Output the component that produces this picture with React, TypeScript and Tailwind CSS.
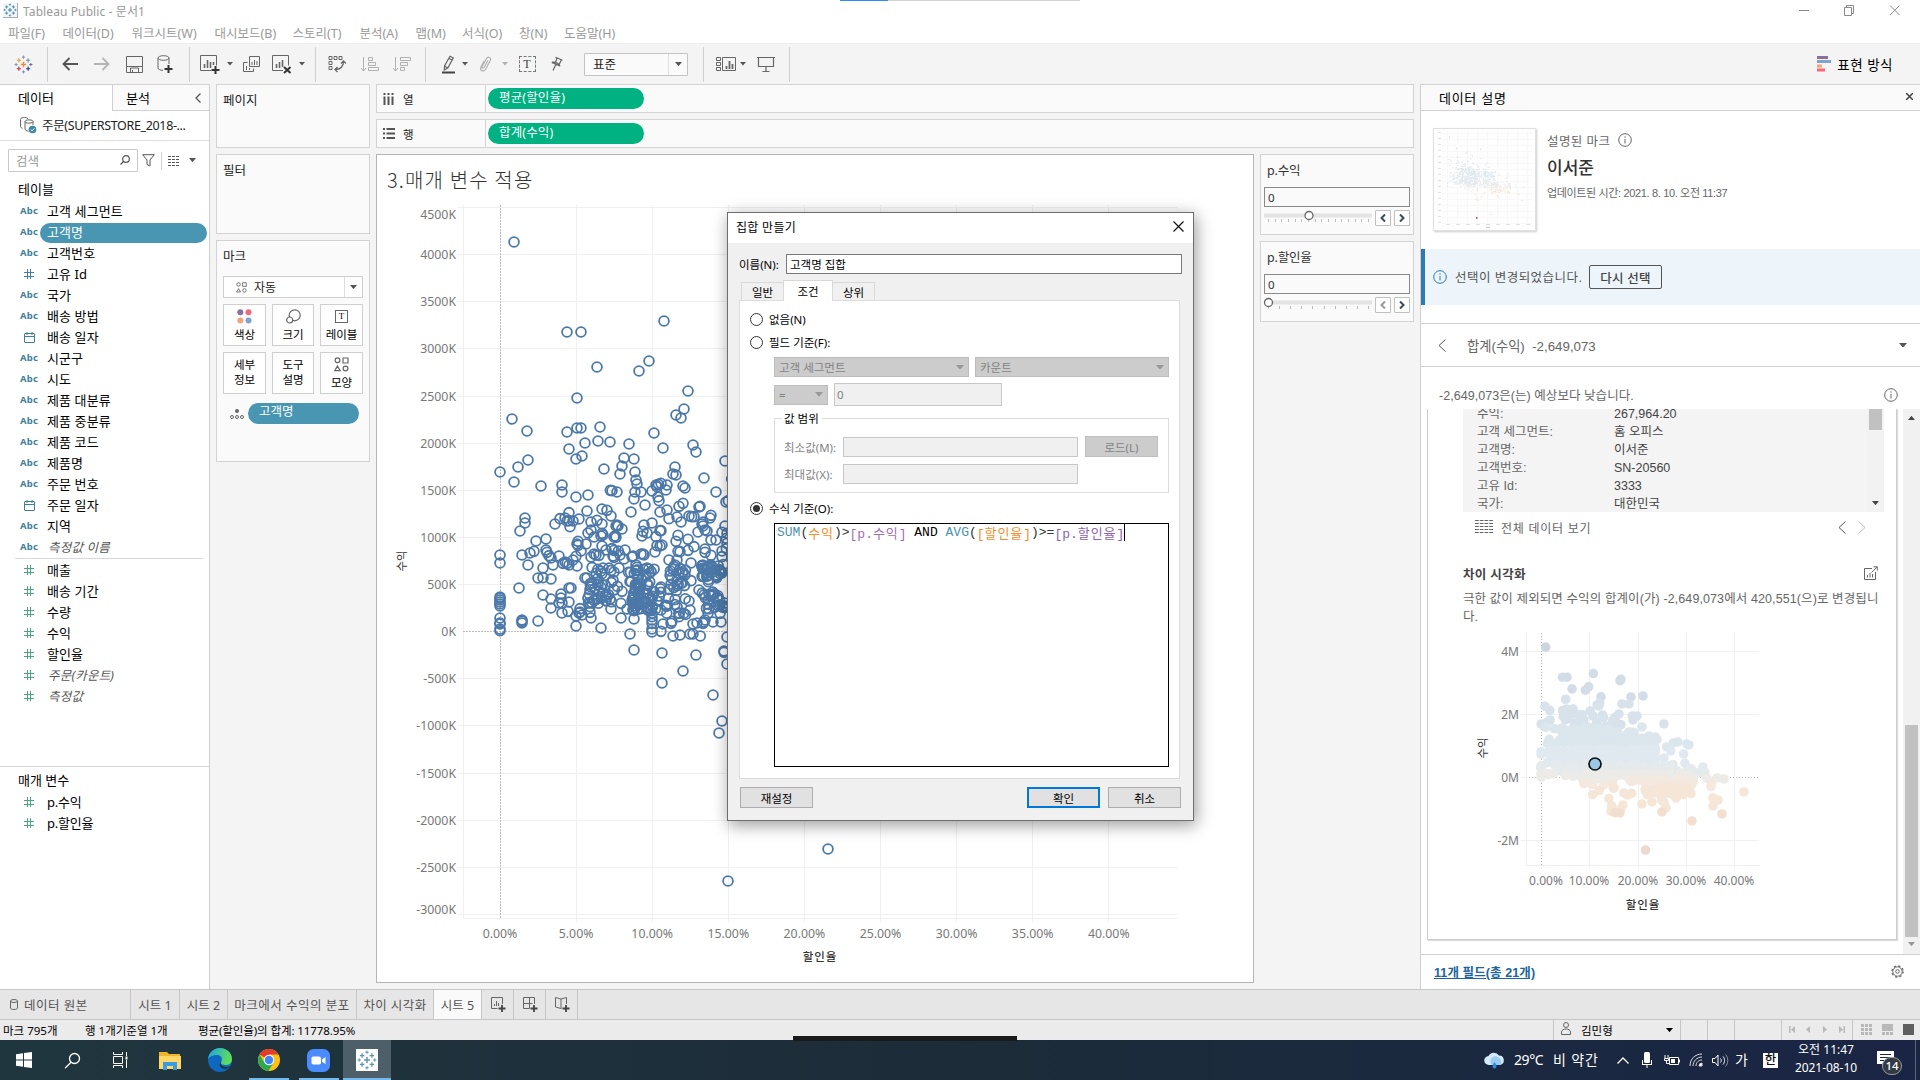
import React from "react";

/* ---------- data ---------- */

type Pt = [number, number];

const upper: Pt[] = [
  [417,276],[867,513],[576,546],[618,546],[822,633],[666,651],[792,663],[606,744],[939,723],[927,777],[903,795],[918,804],[411,807],[456,843],[576,846],[606,834],[618,834],[675,831],[837,849],[630,879],[669,873],[705,876],[762,882],[864,894],[954,885],[963,906],[582,897],[603,927],[621,918],[747,924],[777,927],[1050,933],[459,930],[429,951],[741,948],[687,957],[900,951],[375,966],[780,966],[735,972],[894,972],[903,975],[987,984],[1070,987],[417,996],[498,1008],[561,1005],[561,1026],[783,990],[786,1002],[603,1041],[639,1035],[706,1021],[711,1022],[726,1026],[780,1026],[798,1026],[777,1047],[831,1023],[843,1005],[850,1003],[858,1000],[846,1010],[876,1005],[873,1020],[924,1008],[930,1014],[1023,1026],[849,1041],[852,1052],[810,1065],[768,1086],[681,1077],[696,1081],[708,1098],[636,1083],[582,1088],[924,1060],[912,1069],[975,1069],[972,1071],[1053,1056],[1060,1052],[876,1080],[855,1086],[450,1104],[450,1119],[435,1143],[540,1122],[555,1106],[570,1104],[576,1113],[585,1130],[582,1112],[594,1113],[612,1107],[648,1116],[666,1111],[681,1122],[726,1125],[723,1128],[729,1128],[741,1137],[807,1125],[831,1119],[882,1106],[906,1101],[918,1116],[942,1098],[957,1100],[950,1100],[1008,1096],[1005,1104],[984,1116],[981,1122],[984,1128],[996,1143],[1050,1128],[990,1140],[969,1146],[1041,1147],[483,1173],[513,1167],[639,1149],[648,1140],[681,1150],[684,1155],[678,1158],[657,1161],[717,1161],[720,1158],[723,1162],[801,1158],[804,1144],[816,1149],[843,1160],[855,1142],[858,1142],[909,1156],[939,1168],[903,1174],[1008,1170],[1023,1170],[609,1174],[606,1182],[609,1186],[633,1182],[513,1200],[516,1207],[477,1204],[465,1209],[441,1215],[375,1215],[375,1239],[459,1245],[522,1217],[528,1224],[552,1218],[534,1245],[504,1254],[603,1219],[618,1203],[570,1236],[576,1240],[582,1245],[564,1240],[594,1230],[606,1248],[681,1188],[693,1200],[711,1196],[717,1201],[730,1203],[750,1200],[657,1212],[663,1215],[672,1216],[648,1221],[714,1218],[717,1222],[735,1215],[747,1227],[774,1218],[771,1221],[798,1212],[804,1212],[807,1215],[840,1206],[846,1187],[855,1188],[861,1185],[909,1204],[915,1205],[939,1201],[957,1190],[990,1197],[990,1207],[1008,1216],[1041,1203],[1041,1220],[882,1230],[906,1230],[948,1239],[897,1250],[894,1258],[900,1245],[684,1254],[702,1254],[732,1254],[783,1245],[786,1252],[816,1254],[717,1266],[980,1248],[984,1256],[1010,1250],[1020,1260],[1030,1248],[1035,1262],[1054,1165],[1056,1180],[1054,1196],[1056,1150],
];

const lower: Pt[] = [
  [489,54],[504,53],[528,57],[630,54],[636,54],[432,84],[504,105],[558,102],[558,114],[582,84],[588,84],[528,117],[528,144],[561,129],[561,159],[582,126],[579,154],[552,129],[645,129],[645,140],[645,157],[648,174],[603,168],[612,159],[615,156],[621,165],[615,146],[603,198],[678,204],[738,174],[777,177],[765,222],[777,270],[861,279],[963,285],[924,333],[861,369],[1014,405],[1041,483],[1032,519],[1059,963],[1359,867],[441,180],[441,184],[441,189],[489,183],[375,111],[375,115],[375,120],[375,126],[375,132],[375,138],[375,174],[375,189],[375,192],[375,207],[375,212],[1047,273],[1047,277],[1056,312],[1056,231],[894,228],[915,225],[945,222],[954,222],[976,228],[858,214],[831,216],[831,207],[831,190],[831,180],[831,170],[831,160],[864,192],[891,184],[888,190],[954,192],[966,189],[984,190],[987,186],[990,180],[1014,186],[1038,186],[1035,160],[945,150],[942,123],[999,160],[972,90],[1000,65],[930,45],[948,62],[918,70],[922,68],[708,147],[858,150],[912,170],[912,160],[756,147],[741,94],[738,130],
];

function makeRandom(seed: number) {
  let s = seed;
  return () => {
    s = (s * 1664525 + 1013904223) % 4294967296;
    return s / 4294967296;
  };
}

function scatter(seed: number, n: number, x0: number, x1: number, y0: number, y1: number): Pt[] {
  const r = makeRandom(seed);
  return Array.from({ length: n }, () => [x0 + r() * (x1 - x0), y0 + r() * (y1 - y0)] as Pt);
}

const dense: Pt[] = [
  ...scatter(7, 38, 634, 730, 22, 130),
  ...scatter(11, 22, 758, 840, 25, 80),
  ...scatter(23, 52, 770, 858, 75, 155),
  ...scatter(31, 28, 870, 935, 20, 165),
  ...scatter(43, 28, 978, 1054, 12, 60),
  ...scatter(57, 26, 980, 1056, 95, 150),
];

const mainPoints: Pt[] = [
  ...upper.map(([x, y]) => [375 + x / 3, 150 + y / 3] as Pt),
  ...[...lower, ...dense].map(([x, y]) => [375 + x / 3, 560 + y / 3] as Pt),
];

const outliers: Pt[] = [
  [618,178],[615,182],[648,231],[684,228],[621,252],[642,252],[612,282],[600,300],[652,288],[666,288],[654,300],[747,312],[681,321],[618,314],[702,348],[726,358],[755,381],[775,369],[789,366],[816,372],[822,375],[767,393],[806,402],[747,414],[774,434],[765,436],[810,430],[828,446],[820,450],[864,441],[855,457],[870,457],[876,475],[906,474],[927,477],[888,500],[890,488],[987,516],[894,534],[909,540],[894,558],[921,582],[831,603],[741,576],[753,564],[747,548],[740,540],[681,552],[711,546],[783,534],[805,524],[828,521],[822,505],[770,522],[740,530],[624,555],[618,567],[615,579],[590,558],[600,578],[597,504],[627,519],[637,525],[650,520],[507,490],[529,492],[700,520],[790,510],[760,500],[705,500],[600,292],[560,330],[606,312],
];

const cloud: Pt[] = [
  ...scatter(3, 230, 500, 660, 335, 478),
  ...scatter(5, 170, 640, 722, 350, 485),
  ...scatter(9, 70, 690, 745, 440, 525),
  ...scatter(13, 60, 730, 835, 452, 500),
  ...scatter(17, 70, 440, 580, 320, 450),
  ...scatter(19, 24, 740, 830, 490, 520),
];

/* Both charts share the same measures: discount rate (%) and profit (M). */
const values: Pt[] = [
  ...mainPoints.filter(([, y]) => y < 880).map(([x, y]) => [(x - 500.3) / 15.2, (631.4 - y) / 94.2] as Pt),
  ...[...outliers, ...cloud].map(([x, y]) => [(x - 379) / 14.5, (472 - y) / 94.5] as Pt),
].sort((a, b) => b[1] - a[1]);

function tone(v: number) {
  if (v > 3.6) return "#cdd6e0";
  if (v > 2.5) return "#d3dde7";
  if (v > 1.6) return "#d8e2eb";
  if (v > 0.9) return "#dbe6ed";
  if (v > 0.4) return "#e0e9ef";
  if (v > 0.12) return "#e5eaec";
  if (v > -0.08) return "#ecebe8";
  if (v > -0.3) return "#f3e9df";
  if (v > -1.1) return "#f5e6d8";
  if (v > -1.6) return "#f3dfd0";
  return "#eed8cd";
}

const dims: [string, string, boolean?][] = [
  ["abc", "고객 세그먼트"],["abc", "고객명", true],["abc", "고객번호"],["num", "고유 Id"],["abc", "국가"],["abc", "배송 방법"],["date", "배송 일자"],["abc", "시군구"],["abc", "시도"],["abc", "제품 대분류"],["abc", "제품 중분류"],["abc", "제품 코드"],["abc", "제품명"],["abc", "주문 번호"],["date", "주문 일자"],["abc", "지역"],["abc", "측정값 이름"],
];
const measures = ["매출", "배송 기간", "수량", "수익", "할인율", "주문(카운트)", "측정값"];

/* ---------- small drawings ---------- */

function Caret({ color = "#555", w = 7 }: { color?: string; w?: number }) {
  return (
    <svg width={w} height={w * 0.6} viewBox="0 0 10 6" className="shrink-0"><path d="M0 0h10L5 6z" fill={color} /></svg>
  );
}

function TableauLogo({ size, mono }: { size: number; mono?: string }) {
  const plus = (x: number, y: number, r: number, c: string, w: number) => (
    <path key={`${x}-${y}`} d={`M${x - r} ${y}h${2 * r}M${x} ${y - r}v${2 * r}`} stroke={mono ?? c} strokeWidth={w} />
  );
  return (
    <svg width={size} height={size} viewBox="0 0 18 18" className="shrink-0">
      {plus(9, 9, 2.6, "#eb8a44", 1.3)}
      {plus(4.6, 5, 2, "#e8a33c", 1.1)}
      {plus(13.4, 5, 2, "#6f9aa5", 1.1)}
      {plus(4.6, 13, 2, "#c4314f", 1.1)}
      {plus(13.4, 13, 2, "#233f7c", 1.1)}
      {plus(9, 2, 1.5, "#7f8fb5", 0.9)}
      {plus(9, 16, 1.5, "#7f8fb5", 0.9)}
      {plus(2, 9, 1.5, "#6aa0b0", 0.9)}
      {plus(16, 9, 1.5, "#5a6b9f", 0.9)}
    </svg>
  );
}

function TypeIcon({ kind, color }: { kind: string; color: string }) {
  if (kind === "abc")
    return <span className="text-[9.500px] leading-none font-bold tracking-[0.1px]" style={{ color }}>Abc</span>;
  if (kind === "date")
    return (
      <svg width="11" height="11" viewBox="0 0 11 11" fill="none" stroke={color}><rect x="0.5" y="1.5" width="10" height="9" rx="0.5" /><path d="M0.5 4.5h10M3 0v3M8 0v3" /></svg>
    );
  return (
    <svg width="10" height="10" viewBox="0 0 10 10" stroke={color}><path d="M0 3.5h10M0 7.5h10M3.500 0v10M6.500 0v10" /></svg>
  );
}

function Info({ color = "#666", size = 14 }: { color?: string; size?: number }) {
  return (
    <svg width={size} height={size} viewBox="0 0 14 14" fill="none" stroke={color} className="shrink-0"><circle cx="7" cy="7" r="6.3" /><path d="M7 6v4.5M7 3.3v1.4" /></svg>
  );
}

function Slot({ w, children }: { w: string; children?: React.ReactNode }) {
  return <div className={`flex h-full shrink-0 items-center justify-center ${w}`}>{children}</div>;
}
const Sep = () => <div className="h-[35px] w-px shrink-0 bg-[#d0d0d0]" />;

const g = "#666";

/* ---------- window chrome ---------- */

function TitleBar() {
  return (
    <div className="flex h-[43px] shrink-0 flex-col bg-white text-[#999]">
      <div className="flex h-[22px] items-center">
        <div className="ml-[3px] mt-[-2px] flex h-[15px] w-[15px] items-center justify-center border-r border-b border-[#aaa] bg-[#f3f6f8]">
          <TableauLogo size={14} mono="#3a87b4" />
        </div>
        <span className="ml-[5px] text-[12px] tracking-[0.1px]">Tableau Public - 문서1</span>
        <div className="ml-auto flex items-center pr-[20px] pb-[2px]">
          <svg width="101" height="12" viewBox="0 0 101 12" fill="none" stroke="#8a8a8a"><path d="M0 6.5h10M45.500 3.500h7v8h-7zM47.500 3.500v-2h7v8h-2M91 1.500l9.500 9.500M100.500 1.500L91 11" /></svg>
        </div>
      </div>
      <div className="flex h-[21px] items-center pl-[8px] text-[12.500px]">
        <span className="w-[54.500px]">파일(F)</span>
        <span className="w-[69px]">데이터(D)</span>
        <span className="w-[83px]">워크시트(W)</span>
        <span className="w-[78px]">대시보드(B)</span>
        <span className="w-[67px]">스토리(T)</span>
        <span className="w-[56px]">분석(A)</span>
        <span className="w-[46.500px]">맵(M)</span>
        <span className="w-[57px]">서식(O)</span>
        <span className="w-[45px]">창(N)</span>
        <span>도움말(H)</span>
      </div>
    </div>
  );
}

function Toolbar() {
  return (
    <div className="flex h-[41px] shrink-0 items-center border-t border-[#eee] bg-[#f4f4f4]">
      <Slot w="w-[47px]"><TableauLogo size={19} /></Slot>
      <Sep />
      <Slot w="w-[44px]"><svg width="16" height="14" viewBox="0 0 16 14" fill="none" stroke="#555" strokeWidth="1.8"><path d="M16 7H1.500M7.500 1L1.500 7l6 6" /></svg></Slot>
      <Slot w="w-[20px]"><svg width="16" height="14" viewBox="0 0 16 14" fill="none" stroke="#b5b5b5" strokeWidth="1.8"><path d="M0 7h14.500M8.500 1l6 6-6 6" /></svg></Slot>
      <Slot w="w-[44px]"><svg width="17" height="17" viewBox="0 0 17 17" fill="none" stroke={g}><path d="M0.500 0.500h16v16h-16zM0.500 10.500h16M4.500 16v-4h8v4M6.500 14v2" /></svg></Slot>
      <Slot w="w-[18px]"><svg width="17" height="18" viewBox="0 0 17 18" fill="none" stroke={g}><ellipse cx="6.500" cy="3" rx="5.500" ry="2.300" /><path d="M1 3v10c0 1.300 2 2.300 5 2.300M12 3v6" /><path d="M11.500 10v8M7.500 14h8" stroke="#333" strokeWidth="2" /></svg></Slot>
      <Slot w="w-[15px]" /><Sep /><Slot w="w-[6px]" />
      <Slot w="w-[28px]"><svg width="20" height="19" viewBox="0 0 20 19" fill="none" stroke={g}><path d="M11 15.500H0.500V0.500h16v10" /><path d="M4.500 9v4M7.500 5v8M10.500 7v6M13.500 7v3" strokeWidth="1.600" /><path d="M15.500 11v8M11.500 15h8" stroke="#333" strokeWidth="2" /></svg></Slot>
      <Slot w="w-[12px]"><Caret w={6} /></Slot>
      <Slot w="w-[30px]"><svg width="17" height="17" viewBox="0 0 17 17" fill="none" stroke={g}><path d="M6.500 0.500h10v10h-10zM4.500 6.500h-4v9h10v-3M3.500 10v4M6.500 12v2" /><path d="M9 6v3M11.500 4v5M14 5v4" /></svg></Slot>
      <Slot w="w-[32px]"><svg width="20" height="19" viewBox="0 0 20 19" fill="none" stroke={g}><path d="M11 15.500H0.500V0.500h16v10" /><path d="M4.500 9v4M7.500 7v6M10.500 5v7" strokeWidth="1.600" /><path d="M12 12l6.500 6M18.500 12L12 18" stroke="#333" strokeWidth="2" /></svg></Slot>
      <Slot w="w-[8px]"><Caret w={6} /></Slot>
      <Slot w="w-[9px]" /><Sep />
      <Slot w="w-[42px]"><svg width="18" height="18" viewBox="0 0 18 18" fill="none" stroke={g}><path d="M1 1.500h3v3H1zM6 1.500h3v3H6zM11 1.500h3v3h-3zM1 6.500h3v3H1zM1 11.500h3v3H1z" /><path d="M15.500 6c0 6-3 8.500-8.500 8.500M13 8.500L15.500 6 18 8.500M9.500 12L7 14.500 9.500 17" strokeWidth="1.300" /></svg></Slot>
      <Slot w="w-[24px]"><svg width="18" height="15" viewBox="0 0 18 15" fill="none" stroke="#b0b0b0"><path d="M2.500 0v14M0 11l2.500 3L5 11M7.500 0.500h4v3h-4zM7.500 5.500h7v3h-7zM7.500 10.500h10v3h-10z" /></svg></Slot>
      <Slot w="w-[40px]"><svg width="18" height="15" viewBox="0 0 18 15" fill="none" stroke="#b0b0b0"><path d="M2.500 0v14M0 11l2.500 3L5 11M7.500 0.500h10v3h-10zM7.500 5.500h7v3h-7zM7.500 10.500h4v3h-4z" /></svg></Slot>
      <Slot w="w-[3px]" /><Sep /><Slot w="w-[10px]" />
      <Slot w="w-[24px]"><svg width="13" height="19" viewBox="0 0 13 19" fill="none" stroke={g}><path d="M8 1.200l3.300 1.700-5.500 10.200L2.300 15l.2-4zM2.500 11l3.300 2M7 3.500l3 1.500" strokeWidth="1.200" /><path d="M0 17.500h13" stroke="#444" strokeWidth="2" /></svg></Slot>
      <Slot w="w-[10px]"><Caret w={6} /></Slot>
      <Slot w="w-[30px]"><svg width="13" height="16" viewBox="0 0 13 16" fill="none" stroke="#b0b0b0" strokeWidth="1.200"><path d="M9 4.500L5 11.500c-.8 1.200-2.500.2-1.900-1L7.500 2.500c1.500-2.500 5-.7 3.800 2L6.500 13.500c-2 3-6 .8-4.500-2.500L5 5" /></svg></Slot>
      <Slot w="w-[10px]"><Caret w={6} color="#b0b0b0" /></Slot>
      <Slot w="w-[34px]"><span className="flex h-[16px] w-[17px] items-center justify-center border border-dashed border-[#777] text-[12px] leading-none text-[#444] [font-family:'Liberation_Serif',serif]">T</span></Slot>
      <Slot w="w-[26px]"><svg width="14" height="16" viewBox="0 0 14 16" fill="none" stroke={g} strokeWidth="1.200"><path d="M5.500 1.200l7 3M7 2L5.500 6.500M11.300 3.800L9.300 8.300M2 6.200c3-.6 7 1 8 4M1.800 6.400l8 3.600M5.800 8.500L3 14.500" /></svg></Slot>
      <Slot w="w-[14px]" />
      <div className="flex h-[23px] w-[104px] shrink-0 items-center rounded-[1px] border border-[#c3c3c3] bg-[#fafafa] text-[12.500px] text-[#222]">
        <span className="-mt-px flex-1 pl-[8px]">표준</span>
        <span className="flex h-full w-[19px] items-center justify-center border-l border-[#e0e0e0]"><Caret /></span>
      </div>
      <Slot w="w-[15px]" /><Sep /><Slot w="w-[10px]" />
      <Slot w="w-[24px]"><svg width="20" height="15" viewBox="0 0 20 15" fill="none" stroke={g}><path d="M0.500 0.500h4v3h-4zM0.500 5.500h4v3h-4zM0.500 10.500h4v3h-4zM6.500 0.500h13v13h-13z" /><path d="M10.500 9v3M13.500 4v8M16.500 7v5" strokeWidth="1.800" /></svg></Slot>
      <Slot w="w-[10px]"><Caret w={6} /></Slot>
      <Slot w="w-[36px]"><svg width="18" height="16" viewBox="0 0 18 16" fill="none" stroke={g}><path d="M0 1.500h18M1.500 2v8.500h15V2M9 10.500v5M5.500 15.500h7" strokeWidth="1.200" /></svg></Slot>
      <Slot w="w-[5px]" /><Sep />
      <div className="ml-auto flex items-center gap-[6px] pr-[27px]">
        <svg width="14" height="16" viewBox="0 0 14 16"><path d="M0 0h11v3H0z" fill="#8b6f9c" /><path d="M0 4h14v3H0z" fill="#7fa3cd" /><path d="M0 8.500h5v3H0z" fill="#f2a37c" /><path d="M0 12.500h8v3H0z" fill="#f2697d" /></svg>
        <span className="-mt-px text-[13.500px] tracking-[0.500px] text-black">표현 방식</span>
      </div>
    </div>
  );
}

/* ---------- left pane ---------- */

function DataPane() {
  return (
    <div className="flex w-[210px] shrink-0 flex-col border-r border-[#cfcfcf] bg-white text-[13px] text-black">
      <div className="flex h-[27px] shrink-0">
        <div className="flex w-[112px] items-center border-t border-[#d0d0d0] pb-[2px] pl-[18px]">데이터</div>
        <div className="flex flex-1 items-center justify-between border border-r-0 border-[#d0d0d0] bg-[#fafafa] pr-[8px] pl-[13px]">
          <span>분석</span>
          <svg width="6" height="10" viewBox="0 0 6 10" fill="none" stroke="#555" strokeWidth="1.300"><path d="M5.500 0.500L1 5l4.500 4.500" /></svg>
        </div>
      </div>
      <div className="flex h-[30px] shrink-0 items-center border-b border-[#dedede] pl-[20px]">
        <svg width="17" height="17" viewBox="0 0 17 17" fill="none" stroke={g}><path d="M8 1.500C6-.2 0 .4 0.500 2.500v7c0 1 1 1.500 2 1.800" /><ellipse cx="9" cy="4.500" rx="4" ry="1.700" /><path d="M5 4.500V12c0 1 1.500 2 3.500 2.200M13 4.500V8" /><circle cx="12.500" cy="12.500" r="3.800" fill="#3d86a8" stroke="none" /><path d="M10.700 12.500l1.400 1.400 2.300-2.600" stroke="#fff" /></svg>
        <span className="-mt-[2px] ml-[5px] text-[12.500px] tracking-[-0.35px] whitespace-nowrap text-[#222]">주문(SUPERSTORE_2018-...</span>
      </div>
      <div className="mt-[8px] flex h-[23px] shrink-0 items-center pl-[8px]">
        <div className="flex h-full w-[130px] items-center justify-between rounded-[1px] border border-[#c8c8c8] pr-[7px] pb-px pl-[7px] text-[12.500px] text-[#999]">
          검색
          <svg width="10" height="10" viewBox="0 0 10 10" fill="none" stroke="#555" strokeWidth="1.200"><circle cx="6" cy="4" r="3.300" /><path d="M3.500 6.500L0.500 9.500" /></svg>
        </div>
        <svg className="ml-[4px]" width="13" height="13" viewBox="0 0 13 13" fill="none" stroke="#555"><path d="M0.700 0.700h11.600L8 6v6l-3-1.500V6z" /></svg>
        <div className="ml-[6px] h-[18px] w-px bg-[#d5d5d5]" />
        <svg className="mr-[9px] ml-[6px]" width="12" height="10" viewBox="0 0 12 10" stroke="#555" strokeDasharray="3 1"><path d="M0 .5h12M0 3.500h12M0 6.500h12M0 9.500h12" /></svg>
        <Caret />
      </div>
      <div className="mt-[4px] flex h-[24px] shrink-0 items-center pl-[18px]">테이블</div>
      {dims.map(([k, name, sel]) => (
        <div key={name} className="flex h-[21px] shrink-0 items-center">
          <span className="flex w-[40px] justify-end pt-px"><span className="flex w-[22px] justify-center"><TypeIcon kind={k} color="#3f809b" /></span></span>
          <span className={sel ? "mt-[2px] flex h-[20px] w-[167px] items-center rounded-full bg-[#4996b2] pb-[2px] pl-[7px] text-white" : name === "측정값 이름" ? "pl-[8px] text-[12.500px] tracking-[0.2px] text-[#555] italic" : "pl-[7px] tracking-[0.1px]"}>{name}</span>
        </div>
      ))}
      <div className="mt-px mr-[6px] ml-[15px] h-px shrink-0 bg-[#d8d8d8]" />
      {measures.map((name, i) => (
        <div key={name} className="flex h-[21px] shrink-0 items-center">
          <span className="flex w-[40px] justify-end pt-px"><span className="flex w-[22px] justify-center"><TypeIcon kind="num" color="#4ba583" /></span></span>
          <span className={i > 4 ? "pl-[8px] text-[12.500px] tracking-[0.2px] text-[#555] italic" : "pl-[7px] tracking-[0.1px]"}>{name}</span>
        </div>
      ))}
      <div className="mt-auto h-[223px] shrink-0 border-t border-[#d8d8d8]">
        <div className="flex h-[24px] items-center pl-[18px]">매개 변수</div>
        {["p.수익", "p.할인율"].map((n) => (
          <div key={n} className="flex h-[21px] items-center">
            <span className="flex w-[40px] justify-end pt-px"><span className="flex w-[22px] justify-center"><TypeIcon kind="num" color="#4ba583" /></span></span>
            <span className="pl-[7px] tracking-[-0.2px]">{n}</span>
          </div>
        ))}
      </div>
    </div>
  );
}

/* ---------- shelves ---------- */

function ShapesIcon({ s = 15 }: { s?: number }) {
  return (
    <svg width={s} height={s} viewBox="0 0 15 15" fill="none" stroke={g} strokeWidth="1.200"><circle cx="3.500" cy="3.300" r="2.400" /><path d="M9 1h5v5H9zM3.500 9l2.700 4.600H.8z" /><circle cx="11.500" cy="11.500" r="2.400" /></svg>
  );
}

function MarkButton({ icon, label }: { icon?: React.ReactNode; label: React.ReactNode }) {
  return (
    <div className={`flex h-[42px] flex-col items-center justify-center gap-[2px] border border-[#cfcfcf] bg-white text-[11.500px] leading-[15px] text-black ${icon ? "" : "pb-[2px]"}`}>
      {icon && <div className="flex h-[17px] items-center">{icon}</div>}
      <span className="text-center">{label}</span>
    </div>
  );
}

function Shelves() {
  return (
    <div className="flex w-[154px] shrink-0 flex-col gap-[6px] text-[12.500px] text-[#222]">
      <div className="h-[64px] shrink-0 border border-[#d3d3d3] bg-[#fafafa] px-[6px] pt-[6px] leading-[19px]">페이지</div>
      <div className="h-[80px] shrink-0 border border-[#d3d3d3] bg-[#fafafa] px-[6px] pt-[6px] leading-[20px]">필터</div>
      <div className="h-[222px] shrink-0 border border-[#d3d3d3] bg-[#fafafa] px-[6px] pt-[5px]">
        <div className="h-[30px] leading-[21px]">마크</div>
        <div className="flex h-[22px] items-center border border-[#cfcfcf] bg-white text-[12px]">
          <span className="ml-[12px]"><ShapesIcon s={11} /></span>
          <span className="ml-[7px] flex-1">자동</span>
          <span className="flex h-full w-[18px] items-center justify-center border-l border-[#ddd]"><Caret /></span>
        </div>
        <div className="mt-[6px] grid grid-cols-[43px_42px_43px] gap-[6px]">
          <MarkButton label="색상" icon={<svg width="15" height="15" viewBox="0 0 15 15"><circle cx="3.300" cy="3.300" r="3" fill="#8b6f9c" /><circle cx="11.500" cy="3.300" r="3" fill="#f2697d" /><circle cx="3.300" cy="11.500" r="3" fill="#f2a37c" /><circle cx="11.500" cy="11.500" r="3" fill="#7fa3cd" /></svg>} />
          <MarkButton label="크기" icon={<svg width="15" height="15" viewBox="0 0 15 15" fill="none" stroke={g} strokeWidth="1.200"><circle cx="8.700" cy="6.300" r="5.500" /><circle cx="3.700" cy="11" r="3" fill="#fff" /></svg>} />
          <MarkButton label="레이블" icon={<span className="flex h-[13px] w-[13px] items-center justify-center border border-[#666] text-[9px] leading-none [font-family:'Liberation_Serif',serif]">T</span>} />
          <MarkButton label={<>세부<br />정보</>} />
          <MarkButton label={<>도구<br />설명</>} />
          <MarkButton label="모양" icon={<ShapesIcon />} />
        </div>
        <div className="mt-[9px] flex h-[21px] items-center">
          <svg className="mr-[4px] ml-[7px]" width="14" height="10" viewBox="0 0 14 10" fill="none" stroke={g}><circle cx="7" cy="2" r="2" fill={g} stroke="none" /><circle cx="2" cy="8" r="1.500" /><circle cx="7" cy="8" r="1.500" /><circle cx="12" cy="8" r="1.500" /></svg>
          <span className="h-[21px] w-[111px] rounded-full bg-[#4996b2] pl-[11px] text-[12.500px] leading-[18px] text-white">고객명</span>
        </div>
      </div>
    </div>
  );
}

function RowColShelf({ kind, label, pill }: { kind: "col" | "row"; label: string; pill: string }) {
  return (
    <div className="flex h-[29px] shrink-0 items-center border border-[#d3d3d3] bg-[#fafafa]">
      <div className="flex h-full w-[109px] items-center border-r border-[#d3d3d3] pl-[6px] text-[11.500px] text-[#222]">
        {kind === "col" ? (
          <svg width="12" height="12" viewBox="0 0 12 12" stroke="#555" strokeWidth="2"><path d="M1.500 0v2M5.500 0v2M9.500 0v2M1.500 3.500V12M5.500 3.500V12M9.500 3.500V12" /></svg>
        ) : (
          <svg width="12" height="11" viewBox="0 0 12 11" stroke="#555" strokeWidth="1.800"><path d="M0 1h2M0 5.500h2M0 10h2M3.500 1H12M3.500 5.500H12M3.500 10H12" /></svg>
        )}
        <span className="ml-[8px]">{label}</span>
      </div>
      <span className="ml-[2px] h-[21px] w-[156px] rounded-full bg-[#00b181] pl-[11px] text-[12.500px] leading-[19px] tracking-[0.15px] text-white">{pill}</span>
    </div>
  );
}

/* ---------- main chart ---------- */

function Worksheet() {
  const yl = Array.from({ length: 16 }, (_, i) => 4500 - i * 500);
  return (
    <div className="flex w-[878px] shrink-0 flex-col border border-[#b5b5b5] bg-white">
      <div className="h-[45px] shrink-0 pl-[10px] text-[20px] leading-[50px] font-light tracking-[1.15px] text-[#333] [font-family:'Noto_Sans_CJK_KR',sans-serif]">3.매개 변수 적용</div>
      <svg width="876" height="782" viewBox="377 200 876 782">
        <g stroke="#f0f0f0" strokeWidth="1">
          {yl.map((v, i) => v !== 0 && <path key={v} d={`M458 ${Math.round(207 + i * 47.13) + 0.5}H1177`} />)}
          {[463.5, 576.5, 652.5, 728.5, 804.5, 880.5, 956.5, 1032.5, 1108.5].map((x) => <path key={x} d={`M${x} 205V${x < 470 ? 918 : 922}`} />)}
          <path d="M463 918.500H1177" />
        </g>
        <g stroke="#bdbdbd" strokeDasharray="2 1"><path d="M500.500 205V918M463 631.500H1177" /></g>
        <g fill="none" stroke="#4c78a8" strokeWidth="1.800">
          {mainPoints.map(([x, y], i) => <circle key={i} cx={x} cy={y} r="4.900" />)}
        </g>
        <g fill="#787878" fontSize="12.300" fontFamily="Noto Sans">
          {yl.map((v, i) => (
            <text key={v} x="456" y={i === 0 ? 219 : i === 15 ? 914 : 212 + i * 47.13} textAnchor="end">{v}K</text>
          ))}
          {[0, 5, 10, 15, 20, 25, 30, 35, 40].map((v) => (
            <text key={v} x={500 + v * 15.22} y="938" textAnchor="middle">{v}.00%</text>
          ))}
        </g>
        <g fill="#333" fontSize="11.500" fontFamily="Noto Sans CJK KR" textAnchor="middle">
          <text x="820" y="961" fontWeight="500" letterSpacing="0.9">할인율</text>
          <text transform="translate(406 561) rotate(-90)">수익</text>
        </g>
      </svg>
    </div>
  );
}

function ParamCard({ name, pos, ticks, leftOff }: { name: string; pos: number; ticks: number; leftOff?: boolean }) {
  const chevron = (d: string, c: string) => (
    <span className="flex h-[16px] w-[16px] items-center justify-center rounded-[1px] border border-[#c0c0c0] bg-white">
      <svg width="6" height="8" viewBox="0 0 6 8" fill="none" stroke={c} strokeWidth="2"><path d={d} /></svg>
    </span>
  );
  return (
    <div className="h-[81px] shrink-0 border border-[#d3d3d3] bg-[#fafafa] px-[3px] text-[12.500px] text-[#333]">
      <div className="h-[32px] pt-[5px] pl-[3px] leading-[22px] tracking-[-0.2px]">{name}</div>
      <div className="flex h-[20px] items-center border border-[#8a8a8a] bg-[#fafafa] pl-[3px] text-[11.500px]">0</div>
      <div className="mt-[3px] flex items-center justify-between">
        <svg width="108" height="17" viewBox="0 0 108 17" fill="none" className="overflow-visible">
          <path d="M0 5.500h108" stroke="#e3e3e3" strokeWidth="4" />
          {Array.from({ length: ticks }, (_, i) => <path key={i} d={`M${Math.round(4 + (i * 100) / (ticks - 1)) + 0.5} 9v3`} stroke="#bbb" />)}
          <circle cx={pos} cy="5.500" r="4" fill="#fff" stroke="#666" strokeWidth="1.300" />
        </svg>
        <div className="-mt-[2px] flex gap-[3px]">
          {chevron("M5 0.500L1.500 4 5 7.500", leftOff ? "#999" : "#3c4a63")}
          {chevron("M1 0.500L4.500 4 1 7.500", "#3c4a63")}
        </div>
      </div>
    </div>
  );
}

/* ---------- explain data panel ---------- */

function MiniChart() {
  return (
    <svg width="420" height="300" viewBox="1463 626 420 300" className="block">
      <g stroke="#f0f0f0">
        <path d="M1521 651.500H1759M1521 714.500H1759M1521 840.500H1759M1521 777.500H1527M1526.500 632V866M1589.500 632V869M1638.500 632V869M1686.500 632V869M1734.500 632V869M1541.500 866v3M1526 865.500H1760" />
      </g>
      <g stroke="#b5b5b5" strokeDasharray="1 2"><path d="M1541.500 633V865M1529 777.500H1759" /></g>
      {values.map(([x, y], i) => <circle key={i} cx={1541.3 + x * 4.833} cy={777.3 - y * 31.5} r="4.800" fill={tone(y)} />)}
      <circle cx="1595" cy="764" r="6" fill="#9cc6e3" stroke="#111" strokeWidth="1.700" />
      <g fill="#787878" fontSize="12" fontFamily="Noto Sans">
        {[["4M", 656], ["2M", 719], ["0M", 782], ["-2M", 845]].map(([t, y]) => <text key={t} x="1519" y={y} textAnchor="end">{t}</text>)}
        {[["0.00%", 1546], ["10.00%", 1589], ["20.00%", 1638], ["30.00%", 1686], ["40.00%", 1734]].map(([t, x]) => <text key={t} x={x} y="885" textAnchor="middle">{t}</text>)}
      </g>
      <g fill="#333" fontSize="11.500" fontFamily="Noto Sans CJK KR" textAnchor="middle">
        <text x="1643" y="909" fontWeight="500" letterSpacing="0.9">할인율</text>
        <text transform="translate(1487 748) rotate(-90)">수익</text>
      </g>
    </svg>
  );
}

function Thumb() {
  return (
    <div className="h-[103px] w-[103px] shrink-0 border border-[#e0e0e0] bg-[#fefefe] shadow-[1px_1px_2px_#ccc]">
      <svg width="101" height="101" viewBox="0 0 101 101">
        <g stroke="#f8f8f8">
          {Array.from({ length: 16 }, (_, i) => <path key={i} d={`M8 ${4.5 + i * 6}h90`} />)}
          {Array.from({ length: 9 }, (_, i) => <path key={i} d={`M${13.5 + i * 10} 2v92`} />)}
        </g>
        {Array.from({ length: 16 }, (_, i) => <path key={i} d={`M4 ${3.5 + i * 6}h3`} stroke="#e0e0e0" />)}
        {Array.from({ length: 9 }, (_, i) => <path key={i} d={`M${12 + i * 10} 95.500h4`} stroke="#e0e0e0" />)}
        <path d="M52 98.500h4" stroke="#ccc" />
        {values.filter((_, i) => i % 2 === 0).map(([x, y], i) => <rect key={i} x={13 + x * 2} y={57 - y * 12} width="1.200" height="1.200" fill={tone(y)} />)}
        <rect x="42" y="88" width="1.500" height="2" fill="#b06a6a" />
      </svg>
    </div>
  );
}

function ExplainPanel() {
  const rows = [["수익:", "267,964.20"], ["고객 세그먼트:", "홈 오피스"], ["고객명:", "이서준"], ["고객번호:", "SN-20560"], ["고유 Id:", "3333"], ["국가:", "대한민국"]];
  return (
    <div className="ml-auto flex w-[500px] shrink-0 flex-col border-l border-[#cfcfcf] bg-white text-[12.500px] text-[#666] [font-family:'Liberation_Sans','Noto_Sans_CJK_KR',sans-serif]">
      <div className="flex h-[27px] shrink-0 items-center justify-between border-y border-[#d0d0d0] bg-[#fafafa] pr-[7px] pl-[18px] text-[13px] text-black">
        <span className="tracking-[0.7px]">데이터 설명</span>
        <svg width="7" height="7" viewBox="0 0 7 7" stroke="#444" strokeWidth="1.500" className="-mt-[2px]"><path d="M0 0l7 7M7 0L0 7" /></svg>
      </div>
      <div className="flex h-[138px] shrink-0 pt-[17px] pl-[12px]">
        <Thumb />
        <div className="ml-[11px]">
          <div className="flex h-[24px] items-center gap-[8px] tracking-[0.400px]">설명된 마크<Info /></div>
          <div className="mt-[5px] h-[24px] text-[17px] leading-[24px] font-medium text-[#333]">이서준</div>
          <div className="mt-[3px] h-[18px] text-[11px] leading-[18px] tracking-[-0.35px] whitespace-nowrap">업데이트된 시간: 2021. 8. 10. 오전 11:37</div>
        </div>
      </div>
      <div className="flex h-[56px] shrink-0 items-center border-l-[4px] border-[#2b7bb0] bg-[#edf5fb] pl-[8px] text-[#555]">
        <Info color="#2b7bb0" />
        <span className="-mt-[2px] ml-[8px] w-[134px] tracking-[0.45px] whitespace-nowrap">선택이 변경되었습니다.</span>
        <span className="flex h-[24px] w-[73px] items-center justify-center rounded-[2px] border border-[#555] font-medium tracking-[0.2px] text-[#444]">다시 선택</span>
      </div>
      <div className="mt-[18px] flex h-[44px] shrink-0 items-center border-y border-[#d0d0d0] pr-[13px] pl-[17px] text-[13.300px]">
        <svg width="8" height="13" viewBox="0 0 8 13" fill="none" stroke="#555"><path d="M7.500 0.500L1 6.500l6.500 6" /></svg>
        <span className="ml-[21px] flex-1">합계(수익)&nbsp; -2,649,073</span>
        <Caret w={8} />
      </div>
      <div className="flex h-[42px] shrink-0 items-center justify-between pt-[13px] pr-[22px] pl-[18px]">
        <span className="tracking-[0.050px]">-2,649,073은(는) 예상보다 낮습니다.</span><Info />
      </div>
      <div className="flex h-[545px] shrink-0">
        <div className="ml-[6px] h-[531px] w-[470px] border border-t-0 border-[#ccc] pl-[35px] shadow-[1px_1px_1px_#ddd]">
          <div className="flex h-[103px] w-[421px] overflow-hidden bg-[#f4f4f4]">
            <div className="-mt-[4px] flex-1 pl-[14px]">
              {rows.map(([a, b]) => (
                <div key={a} className="flex h-[18px] items-center leading-[18px]"><span className="w-[137px]">{a}</span><span className="text-[#444]">{b}</span></div>
              ))}
            </div>
            <div className="flex w-[17px] flex-col items-center justify-between bg-[#f2f2f2] pb-[7px]"><div className="h-[21px] w-[13px] bg-[#c1c1c1]" /><Caret color="#444" /></div>
          </div>
          <div className="flex h-[30px] w-[421px] items-center pr-[18px] pl-[12px] text-[12px]">
            <svg width="18" height="14" viewBox="0 0 18 14" stroke="#666" strokeDasharray="3.750 1"><path d="M0 .5h18M0 3.500h18M0 6.500h18M0 9.500h18M0 12.500h18" /></svg>
            <span className="ml-[8px] flex-1 tracking-[0.7px]">전체 데이터 보기</span>
            <svg width="28" height="13" viewBox="0 0 28 13" fill="none"><path d="M7.500 0.500L1 6.500l6.500 6" stroke="#555" /><path d="M20.500 0.500l6.500 6-6.500 6" stroke="#bbb" /></svg>
          </div>
          <div className="mt-[19px] flex h-[24px] w-[421px] items-center justify-between pr-[6px]">
            <span className="font-bold tracking-[0.3px] text-[#444]">차이 시각화</span>
            <svg width="14" height="14" viewBox="0 0 14 14" fill="none" stroke={g}><path d="M8 2.500H0.500v11h11V6M3.500 9v2.500M6 7v4.500M8.500 8v3.500M7.500 6.500L13 1M9.500 .8h3.800v3.800" /></svg>
          </div>
          <div className="mt-[5px] w-[430px] leading-[18px] tracking-[0.1px] whitespace-nowrap">극한 값이 제외되면 수익의 합계이(가) -2,649,073에서 420,551(으)로 변경됩니<br />다.</div>
          <MiniChart />
        </div>
        <div className="ml-auto flex w-[17px] flex-col items-center bg-[#f1f1f1]">
          <span className="mt-[6px] h-[5px] rotate-180"><Caret color="#444" /></span>
          <div className="mt-[305px] h-[212px] w-[13px] bg-[#c1c1c1]" />
          <span className="mt-[5px]"><Caret color="#999" /></span>
        </div>
      </div>
      <div className="flex h-[35px] shrink-0 items-center justify-between border-t border-[#d0d0d0] pr-[16px] pb-px pl-[13px]">
        <span className="font-bold tracking-[0.1px] text-[#1c659e] underline">11개 필드(총 21개)</span>
        <svg width="13" height="13" viewBox="0 0 13 13" fill="none" stroke={g}><circle cx="6.500" cy="6.500" r="4.700" /><circle cx="6.500" cy="6.500" r="5.600" strokeDasharray="2.200 2.200" strokeWidth="1.300" /><circle cx="6.500" cy="6.500" r="1.800" /></svg>
      </div>
    </div>
  );
}

/* ---------- dialog ---------- */

function Radio({ on, label }: { on?: boolean; label: string }) {
  return (
    <div className="flex h-[20px] items-center gap-[6px]">
      <span className="flex h-[13px] w-[13px] items-center justify-center rounded-full border border-[#333] bg-white">{on && <span className="h-[7px] w-[7px] rounded-full bg-[#333]" />}</span>
      {label}
    </div>
  );
}

function Disabled({ w, children }: { w: string; children: React.ReactNode }) {
  return (
    <div className={`flex h-[20px] items-center justify-between border border-[#bcbcbc] bg-[#cccccc] pr-[4px] pl-[4px] text-[#838383] ${w}`}>{children}<Caret color="#999" w={8} /></div>
  );
}

function Dialog() {
  const btn = "flex h-[21px] w-[73px] items-center justify-center border border-[#adadad] bg-[#e1e1e1]";
  const ko = "tracking-[0.9px]";
  return (
    <div className="absolute top-[212px] left-[727px] flex h-[609px] w-[467px] flex-col border border-[#6e6e6e] bg-[#f0f0f0] text-[11.500px] text-black shadow-[2px_4px_16px_rgba(0,0,0,0.4)] [font-family:'Noto_Sans','Noto_Sans_CJK_KR',sans-serif]">
      <div className="flex h-[30px] shrink-0 items-center justify-between bg-white pr-[9px] pb-[3px] pl-[8px] text-[12px]">
        <span className="tracking-[0.3px]">집합 만들기</span>
        <svg width="11" height="11" viewBox="0 0 11 11" stroke="#111" strokeWidth="1.200"><path d="M.5 .5l10 10M10.500 .5l-10 10" /></svg>
      </div>
      <div className="mt-[11px] flex h-[20px] shrink-0 items-center pl-[11px]">
        <span className="w-[47px] whitespace-nowrap">이름(N):</span>
        <div className="flex h-[20px] w-[396px] items-center border border-[#7a7a7a] bg-white pl-[3px]">고객명 집합</div>
      </div>
      <div className="z-10 mt-[6px] flex h-[21px] shrink-0 items-end pl-[13px]">
        <div className="mb-[1px] flex h-[18px] w-[42px] items-center justify-center border border-r-0 border-b-0 border-[#d9d9d9]">일반</div>
        <div className="flex h-[21px] w-[50px] items-center justify-center border border-b-0 border-[#d9d9d9] bg-white pb-px">조건</div>
        <div className="mb-[1px] flex h-[18px] w-[42px] items-center justify-center border border-b-0 border-l-0 border-[#d9d9d9]">상위</div>
      </div>
      <div className="-mt-px ml-[11px] flex h-[479px] w-[441px] shrink-0 flex-col border border-[#dcdcdc] bg-white pl-[10px]">
        <div className="mt-[8px]"><Radio label="없음(N)" /></div>
        <div className="mt-[3px]"><Radio label="필드 기준(F):" /></div>
        <div className="mt-[5px] flex gap-[6px] pl-[24px]">
          <Disabled w="w-[195px]">고객 세그먼트</Disabled>
          <Disabled w="w-[194px]">카운트</Disabled>
        </div>
        <div className="mt-[6px] flex items-center gap-[6px] pl-[24px]">
          <Disabled w="w-[54px]">=</Disabled>
          <div className="flex h-[23px] w-[168px] items-center border border-[#c8c8c8] bg-[#f0f0f0] pl-[2px] text-[#838383]">0</div>
        </div>
        <div className="mt-[12px] ml-[24px] h-[75px] w-[395px] shrink-0 border border-[#dcdcdc] pl-[9px] text-[#838383]">
          <div className="-mt-[9px] ml-[-2px] w-[40px] bg-white pl-[2px] leading-[17px] text-black">값 범위</div>
          <div className="mt-[9px] flex h-[21px] items-center">
            <span className="w-[59px] whitespace-nowrap">최소값(M):</span>
            <div className="h-[20px] w-[235px] border border-[#c8c8c8] bg-[#f0f0f0]" />
            <div className="ml-[7px] flex h-[21px] w-[73px] items-center justify-center border border-[#bfbfbf] bg-[#cccccc]">로드(L)</div>
          </div>
          <div className="mt-[7px] flex h-[20px] items-center">
            <span className="w-[59px] whitespace-nowrap">최대값(X):</span>
            <div className="h-[20px] w-[235px] border border-[#c8c8c8] bg-[#f0f0f0]" />
          </div>
        </div>
        <div className="mt-[5px]"><Radio on label="수식 기준(O):" /></div>
        <div className="mt-[5px] ml-[24px] h-[244px] w-[395px] shrink-0 border border-black bg-white pl-[2px]">
          <div className="flex h-[17px] items-center text-[13px] whitespace-pre text-[#333] [font-family:'Liberation_Mono','Noto_Sans_CJK_KR',monospace]">
            <span className="text-[#4a92ae]">SUM</span>(<span className={`${ko} text-[#f28e2b]`}>수익</span>)&gt;<span className="text-[#a06fb8]">[p.<span className={ko}>수익</span>]</span><span className="text-black"> AND </span><span className="text-[#4a92ae]">AVG</span>(<span className="text-[#f28e2b]">[<span className={ko}>할인율</span>]</span>)&gt;=<span className="text-[#8e63ad]">[p.<span className={ko}>할인율</span>]</span><span className="h-[17px] w-px bg-black" />
          </div>
        </div>
      </div>
      <div className="mt-[8px] flex pl-[12px]">
        <div className={btn}>재설정</div>
        <div className="ml-[214px] flex h-[21px] w-[73px] items-center justify-center border-2 border-[#0078d7] bg-[#e1e1e1]">확인</div>
        <div className="ml-[8px]"><div className={btn}>취소</div></div>
      </div>
    </div>
  );
}

/* ---------- bottom bars ---------- */

function SheetTabs() {
  const tab = "flex h-full shrink-0 items-center justify-center border-r border-[#c6c6c6] pb-px whitespace-nowrap";
  const plus = <path d="M12 9v7M8.500 12.500h7" stroke="#444" strokeWidth="1.800" />;
  return (
    <div className="flex h-[31px] shrink-0 items-center border-y border-[#c6c6c6] bg-[#e6e6e6] text-[12.500px] text-[#555]">
      <div className={`${tab} w-[131px] !justify-start pl-[10px]`}>
        <svg width="8" height="11" viewBox="0 0 8 11" fill="none" stroke={g}><ellipse cx="4" cy="2" rx="3.500" ry="1.500" /><path d="M.5 2v7c0 2 7 2 7 0V2" /></svg>
        <span className="ml-[6px] tracking-[0.5px]">데이터 원본</span>
      </div>
      <div className={`${tab} w-[49px]`}>시트 1</div>
      <div className={`${tab} w-[48px]`}>시트 2</div>
      <div className={`${tab} w-[129px] tracking-[0.5px]`}>마크에서 수익의 분포</div>
      <div className={`${tab} w-[77px] tracking-[0.4px]`}>차이 시각화</div>
      <div className={`${tab} w-[48px] bg-[#fafafa]`}>시트 5</div>
      <div className={`${tab} w-[32px]`}><svg width="16" height="16" viewBox="0 0 16 16" fill="none" stroke={g}><path d="M7.500 12.500h-6v-11h11V8M4.500 8v2M6.500 5v5M8.500 7v3" />{plus}</svg></div>
      <div className={`${tab} w-[32px]`}><svg width="16" height="16" viewBox="0 0 16 16" fill="none" stroke={g}><path d="M7.500 12.500h-6v-11h11V8M1.500 7.500h9M7.500 1.500v11" />{plus}</svg></div>
      <div className={`${tab} w-[32px]`}><svg width="16" height="16" viewBox="0 0 16 16" fill="none" stroke={g}><path d="M7 12.500L1.500 11V1.500L7 3l5.500-1.500V8M7 3v10" />{plus}</svg></div>
    </div>
  );
}

function StatusBar() {
  const c = "h-full shrink-0 border-l border-[#c6c6c6]";
  return (
    <div className="flex h-[20px] shrink-0 items-center bg-[#ebebeb] text-[11.500px] whitespace-nowrap text-black">
      <span className="w-[82px] pl-[3px]">마크 795개</span>
      <span className="w-[116px] pl-[3px]">행 1개기준열 1개</span>
      <span className="tracking-[-0.1px]">평균(할인율)의 합계: 11778.95%</span>
      <div className={`${c} ml-auto flex w-[127px] items-center pr-[7px] pl-[7px]`}>
        <svg width="10" height="13" viewBox="0 0 10 13" fill="none" stroke={g} className="-mt-[3px]"><circle cx="5" cy="3" r="2.500" /><path d="M.5 12.500V10c0-4 9-4 9 0v2.500z" /></svg>
        <span className="ml-[10px] flex-1">김민형</span><Caret color="#000" />
      </div>
      <div className={`${c} w-[27px]`} /><div className={`${c} w-[27px]`} /><div className={`${c} w-[47px]`} />
      <div className={`${c} flex w-[71px] items-center justify-center pb-px`}>
        <svg width="56" height="7" viewBox="0 0 56 7" fill="#b8b8b8"><path d="M0 0h1.500v7H0zM6 0v7L2 3.500zM21 0v7l-4-3.500zM34 0v7l4-3.500zM50 0v7l4-3.500zM54.500 0H56v7h-1.500z" /></svg>
      </div>
      <div className={`${c} flex w-[68px] items-center pb-px pl-[8px]`}>
        <svg width="54" height="11" viewBox="0 0 54 11" fill="#b8b8b8">
          {[0, 4, 8].map((x) => [0, 4, 8].map((y) => <rect key={`${x}${y}`} x={x} y={y} width="3" height="3" />))}
          <rect x="21" y="0" width="11" height="7" />{[21, 25, 29].map((x) => <rect key={x} x={x} y="8" width="3" height="3" />)}
          <rect x="42" y="0" width="11" height="11" fill="#5e5e5e" />
        </svg>
      </div>
    </div>
  );
}

function Taskbar() {
  const cell = "flex h-full shrink-0 items-center justify-center";
  return (
    <div className="flex h-[40px] shrink-0 items-center bg-linear-to-r from-[#20363f] via-[#1c2c38] to-[#1a2545] text-white">
      <div className={`${cell} w-[48px]`}><svg width="16" height="16" viewBox="0 0 16 16" fill="#fff"><path d="M0 2.200l7-1V7.500H0zM8 1.100L16 0v7.500H8zM0 8.500h7v6.300l-7-1zM8 8.500h8V16l-8-1.100z" /></svg></div>
      <div className={`${cell} w-[48px]`}><svg width="17" height="17" viewBox="0 0 17 17" fill="none" stroke="#fff" strokeWidth="1.300"><circle cx="10.500" cy="6.500" r="5" /><path d="M7 10.200L1 16.300" /></svg></div>
      <div className={`${cell} w-[48px]`}><svg width="17" height="16" viewBox="0 0 17 16" fill="none" stroke="#fff"><path d="M1.500 4.500h9v7h-9zM1.500 0v2.500h9V0M1.500 16v-2.500h9V16M14.500 0v4M14.500 8v8" /><path d="M13.500 4.500h2v3h-2z" fill="#fff" stroke="none" /></svg></div>
      <div className={`${cell} w-[52px]`}><svg width="22" height="19" viewBox="0 0 22 19"><path d="M0 1h8l2 2h11v15H0z" fill="#f0b429" /><path d="M0 5h22v13H0z" fill="#ffd766" /><path d="M4 19v-8h14v8h-4v-4H8v4z" fill="#3a9be0" /></svg></div>
      <div className={`${cell} w-[48px]`}>
        <svg width="24" height="24" viewBox="0 0 24 24"><defs><linearGradient id="ea" x1="0" y1="0" x2="1" y2="0.300"><stop offset="0" stopColor="#1fa2e8" /><stop offset="1" stopColor="#5ddc5a" /></linearGradient></defs><circle cx="12" cy="12" r="12" fill="#0f68c0" /><path d="M0 11C1 4 6 0 12 0c7 0 12 5 12 11 0 4-3 6-6 6-4 0-5-1-5-2s1-2 1-4-2-4-5-4c-4 0-8 2-9 4z" fill="url(#ea)" /><path d="M13 14c-.6 3 2 5 5 5 2 0 4-.8 5-1.800C22.500 18 20 20.500 18 21c-5 .5-8.500-4-5-7z" fill="#20363f" /></svg>
      </div>
      <div className={`${cell} w-[50px]`}>
        <div className={`${cell} w-[40px] border-b-2 border-[#76b9ed] pt-[2px]`}>
          <svg width="22" height="22" viewBox="0 0 22 22"><circle cx="11" cy="11" r="11" fill="#fbc116" /><path d="M11 11L1.500 5.500A11 11 0 0 1 20.500 5.500H11z" fill="#e33b2e" /><path d="M1.500 5.500A11 11 0 0 0 10.500 22L15.500 13.500 11 11 6 13z" fill="#2da94f" /><circle cx="11" cy="11" r="5.200" fill="#fff" /><circle cx="11" cy="11" r="4.200" fill="#4285f4" /></svg>
        </div>
      </div>
      <div className={`${cell} w-[49px]`}>
        <div className={`${cell} w-[40px] border-b-2 border-[#76b9ed] pt-[2px]`}>
          <svg width="23" height="23" viewBox="0 0 23 23"><rect width="23" height="23" rx="6.500" fill="#4a8cff" /><rect x="4.500" y="7.500" width="9.500" height="8" rx="1.800" fill="#fff" /><path d="M15 10.500l3.500-2.500v7L15 12.800z" fill="#fff" /></svg>
        </div>
      </div>
      <div className={`${cell} w-[48px] border-b-2 border-[#76b9ed] bg-[#4d5f68] pt-[2px]`}>
        <div className="flex h-[22px] w-[22px] items-center justify-center bg-white"><TableauLogo size={20} mono="#5b93b5" /></div>
      </div>
      <div className="ml-auto flex h-full items-center">
        <svg width="21" height="17" viewBox="0 0 21 17"><path d="M5 13a4.500 4.500 0 0 1-.5-9A6 6 0 0 1 15 3.500a4.800 4.800 0 0 1 1 9.500z" fill="#d3ebfb" /><path d="M7 12a5 5 0 0 1 9-5 4 4 0 0 1 0 6H8z" fill="#9accf1" /><path d="M10.500 10c1.500 2.500 2 3.500 2 4.500a2 2 0 0 1-4 0c0-1 .5-2 2-4.500z" fill="#2b8be0" /></svg>
        <span className="-mt-[2px] ml-[9px] w-[39px] text-[14px] tracking-[-0.4px]">29°C</span>
        <span className="-mt-[2px] w-[64px] text-[14px] tracking-[0.9px] whitespace-nowrap">비 약간</span>
        <svg width="12" height="7" viewBox="0 0 12 7" fill="none" stroke="#fff" strokeWidth="1.300"><path d="M.5 6.500L6 1l5.500 5.500" /></svg>
        <svg className="ml-[13px]" width="10" height="16" viewBox="0 0 10 16" fill="#fff"><rect x="2" y="0" width="6" height="11" rx="1.500" /><path d="M0 8h1v4h8V8h1v5H5.500v3h-1v-3H0z" /></svg>
        <svg className="ml-[12px]" width="16" height="11" viewBox="0 0 16 11" fill="none" stroke="#fff"><path d="M5.500 2.500h9v7h-9zM15.500 4.500v3M1 0v3M4 0v3M.5 3.500h4v2h-4zM2.500 6v2.500h3" /><path d="M7 4h4v4H7z" fill="#fff" stroke="none" /></svg>
        <svg className="ml-[9px]" width="14" height="14" viewBox="0 0 14 14" fill="none" stroke="#ddd"><path d="M1 13C1 6 6 1 13 1M4 13c0-5 4-9 9-9M7 13c0-3.500 2.500-6 6-6" /><path d="M10 13a3 3 0 0 1 3-3v3z" fill="#fff" /></svg>
        <svg className="ml-[9px]" width="17" height="13" viewBox="0 0 17 13" fill="none" stroke="#fff"><path d="M.5 4.500H3l3-3.500v11L3 8.500H.5zM8.500 4.500c1 1 1 3 0 4M11 2.500c2 2 2 6 0 8" /><path d="M13.500 .5c3 3 3 9 0 12" stroke="#8895a5" /></svg>
        <span className="-mt-[2px] ml-[6px] w-[28px] text-[14px]">가</span>
        <span className="flex h-[15px] w-[15px] items-center justify-center bg-white text-[12.500px] leading-none font-medium text-[#111]">한</span>
        <div className="-mt-[3px] ml-[8px] w-[80px] text-center text-[12px] leading-[18px] whitespace-nowrap"><div>오전 11:47</div><div className="tracking-[-0.05px]">2021-08-10</div></div>
        <div className="relative ml-[11px] h-[26px] w-[38px]">
          <svg width="17" height="16" viewBox="0 0 17 16" className="mt-[4px]"><path d="M0 0h17v13H8l-3 3v-3H0z" fill="#fff" /><path d="M3 3.500h11M3 6.500h11M3 9.500h6" stroke="#1b2643" /></svg>
          <span className="absolute top-[10px] left-[5px] flex h-[18px] w-[20px] items-center justify-center rounded-full border border-[#9a9a9a] bg-[#333a44] text-[11.500px] leading-none font-medium">14</span>
        </div>
        <div className="h-full w-px bg-[#5c6780]" />
        <div className="w-[4px]" />
      </div>
    </div>
  );
}

export default function App() {
  return (
    <div className="relative flex h-[1080px] w-[1920px] flex-col overflow-hidden bg-[#f4f4f4] leading-[normal] [font-family:'Noto_Sans','Noto_Sans_CJK_KR',sans-serif]">
      <TitleBar />
      <Toolbar />
      <div className="flex h-[905px] shrink-0">
        <DataPane />
        <div className="ml-[6px] flex"><Shelves /></div>
        <div className="ml-[6px] flex w-[1038px] shrink-0 flex-col gap-[6px]">
          <RowColShelf kind="col" label="열" pill="평균(할인율)" />
          <RowColShelf kind="row" label="행" pill="합계(수익)" />
          <div className="flex h-[829px] shrink-0 justify-between">
            <Worksheet />
            <div className="flex w-[154px] shrink-0 flex-col gap-[6px]">
              <ParamCard name="p.수익" pos={45} ticks={16} />
              <ParamCard name="p.할인율" pos={4.5} ticks={10} leftOff />
            </div>
          </div>
        </div>
        <ExplainPanel />
      </div>
      <SheetTabs />
      <StatusBar />
      <Taskbar />
      <Dialog />
      <div className="absolute top-0 left-[840px] h-px w-[240px] bg-[#d5d5d5]"><div className="h-px w-[48px] bg-[#2d8cff]" /></div>
      <div className="absolute top-[1036px] left-[793px] h-[5px] w-[224px] bg-[#1a1a1a]" />
    </div>
  );
}
